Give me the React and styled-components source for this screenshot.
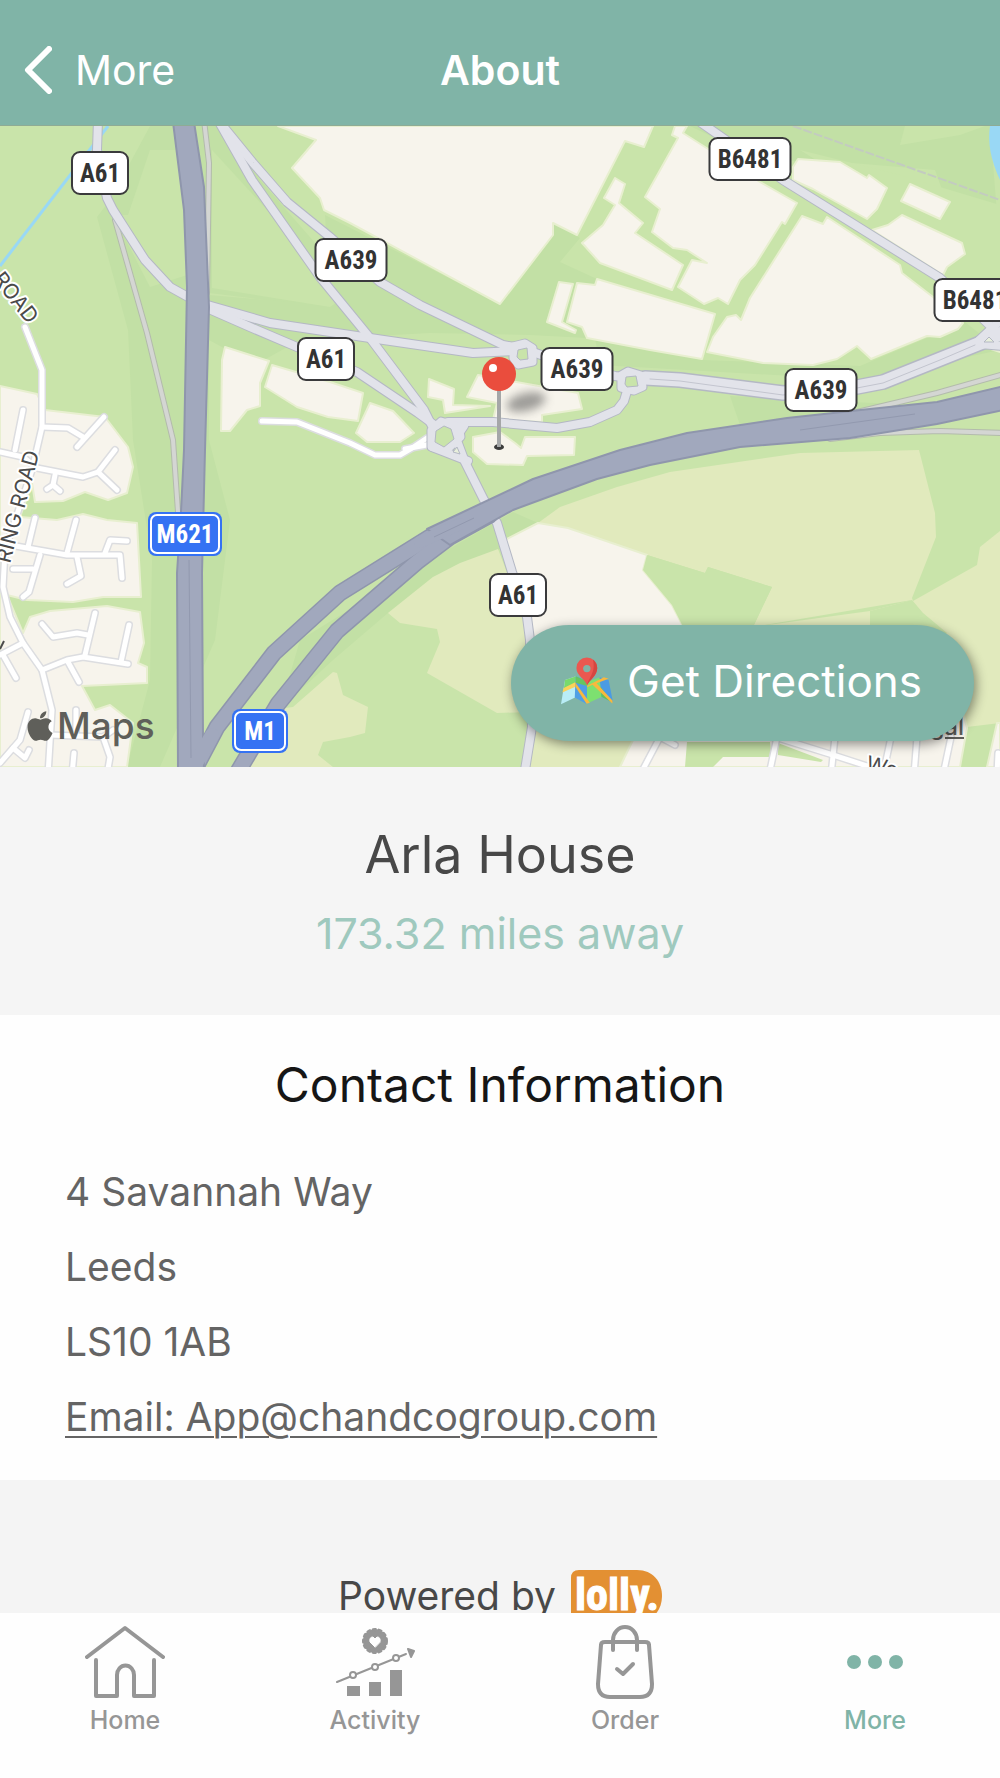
import styled, { createGlobalStyle, css } from "styled-components";
import { FaApple } from "react-icons/fa";

const GlobalStyle = createGlobalStyle`
  * { box-sizing: border-box; }
  body {
    margin: 0;
    background: #fff;
    font-family: Inter, Roboto, "Liberation Sans", sans-serif;
  }
`;

const Screen = styled.div`
  display: flex;
  flex-direction: column;
  height: 100vh;
`;

const Header = styled.header`
  display: grid;
  grid-template-columns: 1fr auto 1fr;
  align-items: center;
  flex: none;
  min-height: 126px;
  padding: 14px 24px 0;
  background: #80b4a7;
  border-bottom: 1px solid #8fab95;
  color: #fff;
`;

const BackButton = styled.button`
  display: flex;
  align-items: center;
  gap: 23px;
  justify-self: start;
  padding: 0;
  border: none;
  background: none;
  color: inherit;
  font: inherit;
  font-size: 41px;
  cursor: pointer;
`;

const HeaderTitle = styled.h1`
  margin: 0;
  font-size: 41px;
  font-weight: 600;
`;

const Content = styled.main`
  flex: 1;
  min-height: 0;
  overflow-y: auto;
  scrollbar-width: none;
`;

const MapArea = styled.section`
  position: relative;
  overflow: hidden;
`;

const MapCanvas = styled.svg`
  display: block;
  width: 100%;
  height: auto;
`;

const MapBrand = styled.div`
  position: absolute;
  left: 23px;
  bottom: 17px;
  display: flex;
  align-items: center;
  color: #5f5f5a;
  font-size: 37px;
  font-weight: 500;
  line-height: 48px;
`;

const LegalLink = styled.a`
  position: absolute;
  right: 36px;
  bottom: 24px;
  color: #5f5f5a;
  font-size: 24px;
  font-weight: 500;
  line-height: 32px;
`;

const DirectionsButton = styled.button`
  position: absolute;
  right: 26px;
  bottom: 26px;
  display: flex;
  align-items: center;
  gap: 14px;
  height: 116px;
  padding: 0 52px 4px 50px;
  border: none;
  border-radius: 58px;
  background: #80b4a7;
  color: #fff;
  font: inherit;
  font-size: 44px;
  box-shadow: 2px 3px 12px rgba(0, 0, 0, 0.45);
  cursor: pointer;
`;

const PlaceCard = styled.section`
  display: flex;
  flex-direction: column;
  align-items: center;
  gap: 10px;
  padding: 52px 24px 50px;
  background: #f5f5f5;
`;

const PlaceName = styled.h2`
  margin: 0;
  color: #484848;
  font-size: 52px;
  font-weight: 400;
  line-height: 72px;
`;

const Distance = styled.p`
  margin: 0;
  color: #9fc9be;
  font-size: 43px;
  line-height: 64px;
`;

const ContactCard = styled.section`
  padding: 38px 65px 26px;
  background: #fefefe;
`;

const ContactTitle = styled.h2`
  margin: 0 0 37px;
  color: #161616;
  font-size: 48px;
  font-weight: 400;
  line-height: 64px;
  text-align: center;
`;

const Address = styled.address`
  display: flex;
  flex-direction: column;
  align-items: flex-start;
  color: #646464;
  font-size: 39px;
  font-style: normal;
  line-height: 75px;
`;

const EmailLink = styled.a`
  color: inherit;
  text-decoration-thickness: 2px;
  text-underline-offset: 5px;
`;

const PoweredBy = styled.footer`
  display: flex;
  align-items: center;
  justify-content: center;
  gap: 15px;
  padding: 88px 24px 40px;
  background: #f4f4f4;
  color: #484848;
  font-size: 39px;
  line-height: 56px;
`;

const TabBar = styled.nav`
  display: grid;
  grid-template-columns: repeat(4, 1fr);
  flex: none;
  padding: 9px 0 39px;
  background: #fefefe;
`;

const Tab = styled.a`
  display: flex;
  flex-direction: column;
  align-items: center;
  color: ${(p) => (p.$active ? "#80b4a7" : "#969696")};
  font-size: 25px;
  font-weight: 500;
  line-height: 37px;
  text-decoration: none;
`;

const TabIcon = styled.svg`
  width: 80px;
  height: 80px;
  fill: none;
  stroke: currentColor;
  stroke-linecap: round;
  stroke-linejoin: round;
`;

const shieldText = css`
  font-family: "Liberation Sans Narrow", "Roboto Condensed", "Liberation Sans", sans-serif;
  font-weight: 700;
  text-anchor: middle;
`;

const ShieldText = styled.text`
  ${shieldText}
  font-size: 25px;
`;

const LogoText = styled.text`
  ${shieldText}
  font-size: 44px;
  fill: #fff;
  stroke: #fff;
  stroke-width: 1px;
`;

const StreetName = styled.text`
  font-size: 21px;
  fill: #4a4a4a;
  stroke: #fff;
  stroke-width: 4px;
  stroke-linejoin: round;
  paint-order: stroke;
`;

const LAND = {
  shade: [
    "97,217 110,200 150,126 220,126 260,180 330,260 330,310 250,298 209,293 209,440 230,520 215,640 160,767 127,767 150,680 152,560 133,440 128,330",
    "209,295 330,305 325,215 500,304 553,223 580,238 560,262 597,279 587,338 530,335 430,333 300,340 255,365 209,340",
    "690,126 990,126 1000,250 965,254 935,170 840,162 760,160",
    "595,338 702,360 860,366 965,322 1000,350 860,380 600,365",
    "300,640 430,560 513,512 538,523 500,549 433,577 388,613 333,660 280,709",
    "730,396 850,402 900,404 740,425",
  ],
  light: [
    "128,215 150,150 176,150 184,210 187,275 150,287 113,215",
    "212,150 290,235 340,300 330,307 212,288",
    "905,126 985,126 960,135 900,145",
    "800,150 900,175 1000,205 1000,290 960,260 880,200",
  ],
  built: [
    "278,126 316,140 292,168 320,198 324,210 350,223 500,304 553,235 553,223 577,235 625,141 644,147 653,126",
    "615,178 625,184 619,203 643,223 635,233 683,265 672,290 600,263 582,243 603,225 615,205 604,198",
    "597,279 715,314 702,359 650,350 587,338 582,327 567,322 577,283 595,285",
    "559,282 573,284 562,322 576,330 575,333 547,322",
    "675,126 672,135 678,138 645,197 660,209 652,232 673,248 687,250 707,263 692,260 678,287 704,304 718,298 728,304 740,280 755,265 782,222 785,224 797,203 760,182 683,133 687,126",
    "802,216 823,224 827,217 900,265 902,273 933,297 963,323 958,329 940,337 927,336 871,359 857,346 837,359 813,365 763,363 707,352 713,337 727,317 736,315 741,320 750,298",
    "793,167 798,159 840,162 867,178 869,175 887,188 877,209 867,219 813,189 793,180",
    "910,184 950,202 940,219 901,201",
    "902,215 962,243 965,254 947,267 943,275 872,230 888,225",
    "225,347 269,361 260,383 260,406 247,410 230,431 221,431 222,360",
    "272,365 330,382 363,393 358,421 328,417 297,407 265,387",
    "370,403 393,411 414,433 400,442 367,442 356,433",
    "429,379 454,389 453,405 490,406 445,413 443,400 428,397",
    "478,375 578,393 582,409 542,415 542,422 493,420 497,403 467,397",
    "473,437 500,432 515,443 521,448 525,437 575,437 574,455 527,456 523,465 487,464 473,452",
    "0,386 37,394 45,410 105,417 128,447 133,467 127,493 108,500 85,492 63,501 35,502 32,483 20,517 57,520 83,514 107,520 137,523 141,597 103,597 73,602 27,600 7,595 23,633 30,617 50,611 107,606 140,612 144,643 138,663 147,667 147,683 82,686 95,710 110,705 133,723 127,767 0,767",
    "505,540 538,523 568,528 647,555 643,570 672,605 690,640 690,690 530,720 533,640",
    "620,767 632,742 660,700 960,700 967,728 960,767",
    "997,723 1000,723 1000,767 987,767",
    "985,347 1000,352 1000,344",
  ],
  field: [
    "498,549 460,563 433,577 388,613 400,623 437,629 440,642 427,673 497,713 530,712 530,767 620,767 650,700 533,690 533,640",
    "333,672 293,707 277,709 250,767 333,767 318,755 323,742 350,737 365,733 368,707 343,695 337,673",
    "538,523 560,507 617,487 670,472 800,453 919,450 935,513 936,537 912,598 913,601 977,565 980,547 1000,531 1000,723 967,727 870,690 870,611 912,600 753,627 772,587 708,567 705,573 647,555 568,528",
    "753,627 870,611 870,690 753,690",
  ],
  park: [
    "870,611 912,600 923,613 947,633 930,650 870,640",
    "647,555 705,573 708,567 772,587 753,627 750,660 700,660 672,605 643,570",
    "687,742 770,742 772,757 723,757 713,767 685,767",
    "778,743 823,760 821,762 778,755",
  ],
};

const MOTORWAY = [
  "173,122 184,210 187,287 184,450 181,512 177,573 178,770 204,770 203,737 202,573 205,450 209,307 204,187 194,122",
  "427,529 533,479 620,450 687,433 787,418 870,409 937,402 1004,386 1004,410 937,424 850,438 740,447 650,465 597,479 513,510 450,545",
];

const MOTORWAY_LINES = [
  "197,765 217,727 274,653 340,593 430,537 483,512",
  "236,775 278,704 337,631 417,562 450,537 490,515",
];

const MAJOR = [
  "98,120 97,150 107,198 113,210 145,260 170,287 197,302 270,323 330,332 370,338 473,353 513,351",
  "209,309 250,327 297,347 357,372 418,413 433,424",
  "218,120 253,163 287,202 330,237 380,282 420,305 503,345 514,347",
  "218,120 252,180 320,277 370,338 424,410 432,426",
  "533,352 560,362 615,376 622,377",
  "627,391 624,401 617,410 590,422 557,428 493,422 448,422",
  "464,426 456,438 465,462 484,500 497,523 512,572 527,617 530,640 532,727 525,770",
  "432,447 445,452 468,461",
  "700,122 783,180 940,278 1003,338",
  "974,345 1003,318",
  "980,344 1004,346",
];

const DUAL = [
  "645,378 680,380 783,393 857,387 883,382 983,342 1004,332",
];

const LOOPS = [
  "513,346 525,343 533,348 533,362 518,365 513,358",
  "621,375 628,371 641,375 643,387 634,391 621,388",
  "431,430 441,421 459,426 461,437 446,451 431,447",
];

const ISLANDS = [
  "518,350 527,348 528,359 520,360 517,357",
  "626,377 636,376 638,386 627,387 625,384",
  "436,431 444,426 451,429 454,439 444,447 435,442",
];

const MINOR = [
  "204,120 209,163 207,293",
  "115,220 147,333 173,440 178,512",
  "857,412 937,393 1004,374",
  "830,439 880,433 940,431 1004,433",
];

const STREETS = [
  "262,421 297,422 350,443 375,455 400,455 412,448 427,438",
  "405,449 432,444",
  "25,327 42,370 42,427 32,470 5,550 3,587 10,617 23,643 42,670 52,710 48,775",
  "42,427 68,428 83,437",
  "104,417 77,447",
  "23,410 15,450",
  "0,452 23,457 37,468 83,477 98,472 115,450",
  "98,472 117,490",
  "55,475 53,485 47,489",
  "53,485 60,491",
  "10,545 67,555 120,555 122,578",
  "35,518 28,547",
  "76,520 67,553",
  "105,553 110,540 127,541",
  "77,557 81,576 67,584",
  "40,555 29,592 23,597",
  "13,569 33,569",
  "42,670 67,660 83,657 128,664",
  "95,613 85,655",
  "42,624 53,637 77,633 88,635",
  "129,625 121,662",
  "68,662 79,682",
  "0,655 23,643",
  "3,655 16,678",
  "28,712 20,740 0,763",
  "13,748 25,758 29,750",
  "50,735 103,737 110,757 107,775",
  "76,710 76,735",
  "74,753 72,775",
  "103,737 113,730",
  "660,737 640,775",
  "660,737 675,745",
  "777,737 769,775",
  "775,737 833,755 870,767",
  "835,737 831,775",
  "891,737 883,775",
  "917,737 914,775",
  "951,737 943,775",
  "998,753 997,775",
];

const SHIELDS = [
  { x: 100, y: 173, w: 56, label: "A61" },
  { x: 351, y: 260, w: 71, label: "A639" },
  { x: 326, y: 359, w: 56, label: "A61" },
  { x: 577, y: 369, w: 71, label: "A639" },
  { x: 750, y: 159, w: 81, label: "B6481" },
  { x: 975, y: 300, w: 81, label: "B6481" },
  { x: 821, y: 390, w: 71, label: "A639" },
  { x: 518, y: 595, w: 56, label: "A61" },
  { x: 185, y: 534, w: 74, label: "M621", motorway: true },
  { x: 260, y: 731, w: 56, label: "M1", motorway: true },
];

function Lines({ items, color, width }) {
  return (
    <g fill="none" stroke={color} strokeWidth={width} strokeLinejoin="round" strokeLinecap="round">
      {items.map((points, i) => <polyline key={i} points={points} />)}
    </g>
  );
}

function Areas({ items, color, edge, edgeWidth = 2 }) {
  return (
    <g fill={color} stroke={edge || "none"} strokeWidth={edgeWidth} strokeLinejoin="round">
      {items.map((points, i) => <polygon key={i} points={points} />)}
    </g>
  );
}

function Shield({ x, y, w, label, motorway }) {
  return (
    <g>
      {motorway ? (
        <>
          <rect x={x - w / 2} y={y - 22} width={w} height="44" rx="8" fill="#3572f3" />
          <rect x={x - w / 2 + 3} y={y - 19} width={w - 6} height="38" rx="6" fill="none" stroke="#fff" strokeWidth="2" />
        </>
      ) : (
        <rect x={x - w / 2} y={y - 21} width={w} height="42" rx="8" fill="#fff" stroke="#3a3a3c" strokeWidth="2" />
      )}
      <ShieldText x={x} y={y + 9} fill={motorway ? "#fff" : "#333"}>{label}</ShieldText>
    </g>
  );
}

function StreetMap() {
  return (
    <MapCanvas viewBox="0 126 1000 641" role="img" aria-label="Map of Arla House">
      <defs>
        <filter id="soft" x="-50%" y="-50%" width="200%" height="200%">
          <feGaussianBlur stdDeviation="5" />
        </filter>
        <path id="ring" d="M10 564 L20 525 L43 440" />
      </defs>
      <rect y="126" width="1000" height="641" fill="#c9e4aa" />
      <Areas items={LAND.shade} color="#c2e0a5" />
      <Areas items={LAND.light} color="#c9e4aa" />
      <Areas items={LAND.field} color="#e1eabd" />
      <Areas items={LAND.built} color="#f7f4ec" edge="#e8efd0" />
      <Areas items={LAND.park} color="#c9e4aa" />
      <path d="M990 126 Q986 150 1000 180 V126Z" fill="#99d8f5" />
      <path d="M108 126 L0 266" stroke="#99d8f5" strokeWidth="3" />
      <path d="M793 126 L1000 200" stroke="#c3cbc0" strokeWidth="2" strokeDasharray="9 2" />

      <Lines items={MINOR} color="#b3bbac" width="6" />
      <Lines items={MINOR} color="#d4d6d3" width="4" />
      <Lines items={STREETS} color="#dcdde0" width="8" />
      <Lines items={STREETS} color="#fff" width="5" />
      <Lines items={MAJOR} color="#b4b8c4" width="10" />
      <Lines items={DUAL} color="#b4b8c4" width="16" />
      <Areas items={LOOPS} color="#e2e3ea" edge="#b4b8c4" edgeWidth={9} />
      <Lines items={MAJOR} color="#e2e3ea" width="8" />
      <Lines items={DUAL} color="#e2e3ea" width="13" />
      <Lines items={["650,379 680,381 783,395 857,388 883,383 940,360 975,345"]} color="#c3c5cf" width="1" />
      <Areas items={LOOPS} color="#e2e3ea" edge="#e2e3ea" edgeWidth={7} />
      <Areas items={ISLANDS} color="#c9e4aa" edge="#b4b8c4" edgeWidth={1} />
      <path d="M457 447 L460 454 L453 452Z M989 337 L994 342 H984Z" fill="#e8efdc" stroke="#b4b8c4" />

      <Lines items={MOTORWAY_LINES} color="#8f96ac" width="17" />
      <Lines items={MOTORWAY_LINES} color="#a1a8bd" width="14" />
      <Areas items={MOTORWAY} color="#a1a8bd" edge="#8f96ac" />
      <Lines items={["195,765 212,735"]} color="#a1a8bd" width="14" />
      <Lines items={["420,542 440,533 460,524"]} color="#a1a8bd" width="12" />
      <path d="M189 560 L191 758 M800 430 L915 414 M434 537 L474 518" fill="none" stroke="#9299af" />

      <StreetName transform="translate(28 325) rotate(52)" textAnchor="end">ROAD</StreetName>
      <StreetName><textPath href="#ring">RING ROAD</textPath></StreetName>
      <StreetName transform="translate(865 770) rotate(14)">We</StreetName>
      <path d="M0 649 L4 641" stroke="#4a4a4a" strokeWidth="2" />

      {SHIELDS.map((s, i) => <Shield key={i} {...s} />)}

      <ellipse cx="526" cy="402" rx="20" ry="9" transform="rotate(-14 526 402)" fill="#555" opacity="0.55" filter="url(#soft)" />
      <ellipse cx="499" cy="447" rx="5" ry="3" fill="#3c3c3c" />
      <path d="M499 388 V447" stroke="#a5a7a8" strokeWidth="4" />
      <circle cx="499" cy="374" r="17" fill="#ea4d3d" />
      <circle cx="493" cy="368" r="4" fill="#fff" />
    </MapCanvas>
  );
}

function MapEmoji() {
  return (
    <svg width="52" height="48" viewBox="0 0 155 142" aria-hidden="true">
      <path d="M12 68 L45 57 L42 120 L0 140Z" fill="#b9edf7" />
      <path d="M12 68 L45 57 L43 78 L8 98Z" fill="#79d96c" />
      <path d="M8 92 L44 74 L43 88 L4 105Z" fill="#fbd25a" />
      <path d="M44 57 L78 72 V140 L41 120Z" fill="#4f9fe4" />
      <path d="M44 57 L78 72 V86 L43 76Z" fill="#68c55f" />
      <path d="M77 74 L116 60 L122 118 L78 138Z" fill="#7de070" />
      <path d="M115 60 L142 68 L155 134 L121 118Z" fill="#4b9be3" />
      <path d="M118 88 L152 134 L121 118Z" fill="#5fc45c" />
      <path d="M42 75 L86 136 L76 139 L43 88Z M78 85 L128 60 L142 64 L106 78 L154 130 L153 138 L94 82 L78 90Z" fill="#f8b83e" />
      <path d="M78 84 C70 62 46 56 46 32 A31 31 0 0 1 108 32 C108 56 85 66 78 84Z" fill="#ea5850" />
      <path d="M95 7 A31 31 0 0 1 108 32 C108 56 85 66 78 84 C82 60 105 46 95 7Z" fill="#d64640" />
      <circle cx="77" cy="34" r="11" fill="#80b4a7" />
    </svg>
  );
}

function LollyLogo() {
  return (
    <svg width="91" height="52" viewBox="0 0 91 52" role="img" aria-label="lolly.">
      <path d="M8 0 H66 C82 0 91 12 91 26 C91 40 82 52 66 52 H8 Q0 52 0 44 V8 Q0 0 8 0Z" fill="#e39033" />
      <LogoText x="46" y="40">lolly.</LogoText>
    </svg>
  );
}

function HomeIcon() {
  return (
    <TabIcon viewBox="0 0 80 80" strokeWidth="4" aria-hidden="true">
      <path d="M2 35 L40 6 L78 35" />
      <path d="M11 38 V74 H32 V53 A8 9 0 0 1 49 53 V74 H69 V38" />
    </TabIcon>
  );
}

function ActivityIcon() {
  return (
    <TabIcon viewBox="0 0 80 80" strokeWidth="2" aria-hidden="true">
      <circle cx="40" cy="19" r="11" fill="currentColor" />
      <circle cx="40" cy="19" r="12" strokeWidth="2" strokeDasharray="3 3" />
      <path d="M40 25 L35 20 Q34 15 38 15 L40 17 L42 15 Q46 15 45 20Z" fill="#fff" stroke="#fff" strokeWidth="1" />
      <path d="M2 60 L71 32" />
      <path d="M73 27 L79 29 L76 35Z" fill="currentColor" />
      <g fill="#fff">
        <circle cx="18" cy="53" r="3" />
        <circle cx="40" cy="45" r="3" />
        <circle cx="61" cy="36" r="3" />
      </g>
      <path d="M12 64 H25 V74 H12Z M34 60 H46 V74 H34Z M55 48 H67 V74 H55Z" fill="currentColor" stroke="none" />
    </TabIcon>
  );
}

function OrderIcon() {
  return (
    <TabIcon viewBox="0 0 80 80" strokeWidth="4" aria-hidden="true">
      <path d="M20 20 H60 Q64 20 64 23 L67 62 Q67 75 55 75 H25 Q13 75 13 62 L16 23 Q16 20 20 20Z" />
      <path d="M28 28 V18 A12 13 0 0 1 52 18 V28" />
      <path d="M32 47 L38 52 L48 42" />
    </TabIcon>
  );
}

function MoreIcon() {
  return (
    <TabIcon viewBox="0 0 80 80" aria-hidden="true">
      <g fill="currentColor" stroke="none">
        <circle cx="19" cy="40" r="7" />
        <circle cx="40" cy="40" r="7" />
        <circle cx="61" cy="40" r="7" />
      </g>
    </TabIcon>
  );
}

const TABS = [
  { label: "Home", Icon: HomeIcon },
  { label: "Activity", Icon: ActivityIcon },
  { label: "Order", Icon: OrderIcon },
  { label: "More", Icon: MoreIcon, active: true },
];

export default function App() {
  return (
    <Screen>
      <GlobalStyle />
      <Header>
        <BackButton type="button">
          <svg width="28" height="48" viewBox="0 0 28 48" fill="none" stroke="#fff" strokeWidth="6" strokeLinecap="round" strokeLinejoin="round" aria-hidden="true">
            <path d="M25 3 L4 24 L25 45" />
          </svg>
          More
        </BackButton>
        <HeaderTitle>About</HeaderTitle>
      </Header>

      <Content>
        <MapArea>
          <StreetMap />
          <MapBrand><FaApple size={34} aria-hidden="true" />Maps</MapBrand>
          <LegalLink href="#legal">Legal</LegalLink>
          <DirectionsButton type="button">
            <MapEmoji />
            Get Directions
          </DirectionsButton>
        </MapArea>

        <PlaceCard>
          <PlaceName>Arla House</PlaceName>
          <Distance>173.32 miles away</Distance>
        </PlaceCard>

        <ContactCard>
          <ContactTitle>Contact Information</ContactTitle>
          <Address>
            <span>4 Savannah Way</span>
            <span>Leeds</span>
            <span>LS10 1AB</span>
            <EmailLink href="mailto:App@chandcogroup.com">Email: App@chandcogroup.com</EmailLink>
          </Address>
        </ContactCard>

        <PoweredBy>
          <span>Powered by</span>
          <LollyLogo />
        </PoweredBy>
      </Content>

      <TabBar>
        {TABS.map(({ label, Icon, active }) => (
          <Tab key={label} href={`#${label.toLowerCase()}`} $active={active} aria-current={active ? "page" : undefined}>
            <Icon />
            {label}
          </Tab>
        ))}
      </TabBar>
    </Screen>
  );
}
